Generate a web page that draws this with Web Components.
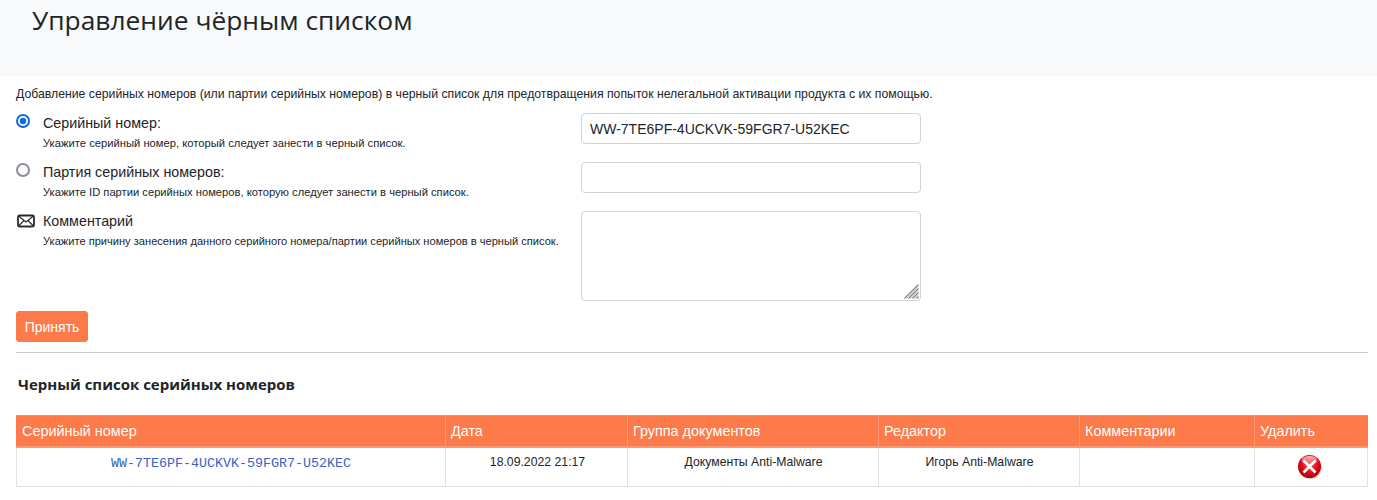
<!DOCTYPE html>
<html lang="ru"><head><meta charset="utf-8"><title>Управление чёрным списком</title>
<style>
html,body{margin:0;padding:0;background:#fff}
body{font-family:"Liberation Sans",Arial,sans-serif;color:#212529;height:500px;overflow:hidden}
</style></head><body>
<bl-page>
  <bl-header slot="header">Управление чёрным списком</bl-header>
  <p-intro>Добавление серийных номеров (или партии серийных номеров) в черный список для предотвращения попыток нелегальной активации продукта с их помощью.</p-intro>
  <bl-field kind="radio-on" height="49" hs="11.22" label="Серийный номер:" hint="Укажите серийный номер, который следует занести в черный список.">
    <bl-input value="WW-7TE6PF-4UCKVK-59FGR7-U52KEC"></bl-input>
  </bl-field>
  <bl-field kind="radio-off" height="49" hs="11.2" label="Партия серийных номеров:" hint="Укажите ID партии серийных номеров, которую следует занести в черный список.">
    <bl-input></bl-input>
  </bl-field>
  <bl-field kind="mail" height="100" hs="11.1" label="Комментарий" hint="Укажите причину занесения данного серийного номера/партии серийных номеров в черный список.">
    <bl-textarea></bl-textarea>
  </bl-field>
  <bl-button>Принять</bl-button>
  <bl-rule></bl-rule>
  <bl-title>Черный список серийных номеров</bl-title>
  <bl-table></bl-table>
</bl-page>
<script>
function def(name,css,html,init){
  customElements.define(name,class extends HTMLElement{
    constructor(){super();this.attachShadow({mode:'open'});}
    connectedCallback(){
      this.shadowRoot.innerHTML='<style>'+css+'</style>'+(typeof html==='function'?html(this):html);
      if(init)init(this);
    }
  });
}
def('bl-page',':host{display:flex;flex-direction:column}','<slot name="header"></slot><main style="padding:0 9px 0 16px;display:flex;flex-direction:column"><slot></slot></main>');
def('bl-header',':host{display:block;height:76px;background:#f8f9fa;box-sizing:border-box;padding:1px 0 0 32px;font:400 26.35px/38px "Open Sans",sans-serif;color:#212529}','<slot></slot>');
def('p-intro',':host{display:block;font:12.25px/14px "Liberation Sans",sans-serif;color:#212529;margin-top:11px;height:26px}','<slot></slot>');
def('bl-field',`:host{display:grid;grid-template-columns:27px 538px 340px;box-sizing:border-box}
.ic{display:flex;justify-content:flex-start;height:16px;margin-top:1px}
.lb{font:14.3px/17px "Liberation Sans",sans-serif;color:#212529;margin-top:2px}
.hn{font:11.1px/13px "Liberation Sans",sans-serif;color:#212529;margin-top:5px;white-space:nowrap}`,
h=>{
  const k=h.getAttribute('kind');
  const icon=k==='radio-on'?'<svg width="14" height="14" viewBox="0 0 14 14"><circle cx="7" cy="7" r="6" fill="#fff" stroke="#0f6ae6" stroke-width="2"/><circle cx="7" cy="7" r="3.200" fill="#0f6ae6"/></svg>'
   :k==='radio-off'?'<svg width="14" height="14" viewBox="0 0 14 14"><circle cx="7" cy="7" r="6" fill="#fff" stroke="#8f8d9b" stroke-width="2"/></svg>'
   :'<svg width="18" height="14" viewBox="0 0 18 14" style="margin:2px 0 0 1px;overflow:visible"><rect x="1" y="1.5" width="16" height="11" rx="1.5" fill="#fff" stroke="#2b2b2b" stroke-width="1.8"/><path d="M1.5 2l7.5 6 7.5-6M1.5 12l5.5-5.500M16.500 12L11 6.500" fill="none" stroke="#2b2b2b" stroke-width="1.200"/></svg>';
  return '<div class="ic">'+icon+'</div><div style="height:'+h.getAttribute('height')+'px"><div class="lb">'+h.getAttribute('label')+'</div><div class="hn" style="font-size:'+h.getAttribute('hs')+'px">'+h.getAttribute('hint')+'</div></div><div><slot></slot></div>';
});
def('bl-input',`:host{display:block;height:31px;margin-top:0}
input{display:block;box-sizing:border-box;width:340px;height:31px;border:1px solid #ced4da;border-radius:4px;padding:0 8px;font:14px "Liberation Sans",sans-serif;color:#212529;background:#fff;outline:0;margin:0}`,
h=>'<input type="text" value="'+(h.getAttribute('value')||'')+'">');
def('bl-textarea',`:host{display:block;height:90px;position:relative}
textarea{display:block;box-sizing:border-box;width:340px;height:90px;border:1px solid #ced4da;border-radius:4px;padding:4px 8px;font:14px "Liberation Sans",sans-serif;background:#fff;outline:0;margin:0;resize:none}
svg{position:absolute;right:2px;bottom:2px}`,`<textarea></textarea><svg width="15" height="15" viewBox="0 0 15 15"><path d="M.5 14.500L14.500 .5M4.500 14.500L14.500 4.500M8.500 14.500L14.500 8.500M12.500 14.500L14.500 12.500" stroke="#7a7a7a" stroke-width="1.100" fill="none"/><path d="M2.500 14.500L14.500 2.500M6.500 14.500L14.500 6.500M10.500 14.500L14.500 10.500" stroke="#cfcfcf" stroke-width="1" fill="none"/></svg>`);
def('bl-button',`:host{display:block;margin-top:0}
button{display:block;box-sizing:border-box;width:72px;height:31px;background:#fd7a4b;border:1px solid #fd7a4b;border-radius:3px;color:#fff;font:14px "Liberation Sans",sans-serif;padding:0;margin:0}`,'<button type="button"><slot></slot></button>');
def('bl-rule',':host{display:block;height:1px;background:#c9c9c9;margin-top:10px}','');
def('bl-title',':host{display:block;font:700 15px/20px "Open Sans",sans-serif;color:#212529;margin:21px 0 0 2px;height:41px}','<slot></slot>');
def('bl-table',`:host{display:block}
table{border-collapse:separate;border-spacing:0;table-layout:fixed;width:1352px;font-family:"Liberation Sans",sans-serif}
th{background:#fd7a4b;color:#fff;font-weight:400;font-size:14.4px;line-height:17px;text-align:left;height:33px;box-sizing:border-box;padding:0 0 0 5px;border-right:1px solid #ff9872;border-top:1px solid #ff8c62;border-bottom:2px solid #ff9872;vertical-align:middle}
th:first-child{border-left:1px solid #fd7a4b}
th:last-child{border-right:1px solid #fd7a4b}
td{height:39px;box-sizing:border-box;border-right:1px solid #dee2e6;border-bottom:1px solid #dee2e6;font-size:12.25px;line-height:14px;color:#212529;text-align:center;vertical-align:top;padding:7px 0 0}
td:first-child{border-left:1px solid #dee2e6}
a{font:13.33px/16px "Liberation Mono",monospace;color:#3b62c4;text-decoration:none}
svg{display:block;margin:0 auto}`,
`<table><colgroup><col style="width:430px"><col style="width:182px"><col style="width:251px"><col style="width:201px"><col style="width:175px"><col style="width:113px"></colgroup>
<thead><tr><th>Серийный номер</th><th>Дата</th><th>Группа документов</th><th>Редактор</th><th>Комментарии</th><th>Удалить</th></tr></thead>
<tbody><tr>
<td style="padding-top:8px"><a href="#">WW-7TE6PF-4UCKVK-59FGR7-U52KEC</a></td>
<td><div style="padding-left:2px">18.09.2022 21:17</div></td>
<td><div style="padding-left:1px">Документы Anti-Malware</div></td>
<td><div style="padding-left:1px">Игорь Anti-Malware</div></td>
<td></td>
<td style="padding-top:6px"><svg width="26" height="26" viewBox="0 0 26 26" style="margin-left:42px">
<defs><radialGradient id="g" cx="50%" cy="40%" r="62%"><stop offset="0" stop-color="#ff5060"/><stop offset=".6" stop-color="#e20a18"/><stop offset="1" stop-color="#9c0006"/></radialGradient>
<linearGradient id="h" x1="0" y1="0" x2="0" y2="1"><stop offset="0" stop-color="#fff" stop-opacity=".7"/><stop offset="1" stop-color="#fff" stop-opacity=".05"/></linearGradient>
<radialGradient id="s" cx="50%" cy="50%" r="50%"><stop offset=".7" stop-color="#000" stop-opacity=".35"/><stop offset="1" stop-color="#000" stop-opacity="0"/></radialGradient></defs>
<ellipse cx="13.500" cy="14" rx="12.500" ry="12" fill="url(#s)"/>
<circle cx="12.500" cy="12.500" r="11.500" fill="url(#g)"/>
<ellipse cx="12.500" cy="6.500" rx="8" ry="4.500" fill="url(#h)"/>
<path d="M6.500 6.500l12 12M18.500 6.500l-12 12" stroke="#fff" stroke-width="2.600" stroke-linecap="butt"/>
</svg></td>
</tr></tbody></table>`);
</script>
</body></html>
